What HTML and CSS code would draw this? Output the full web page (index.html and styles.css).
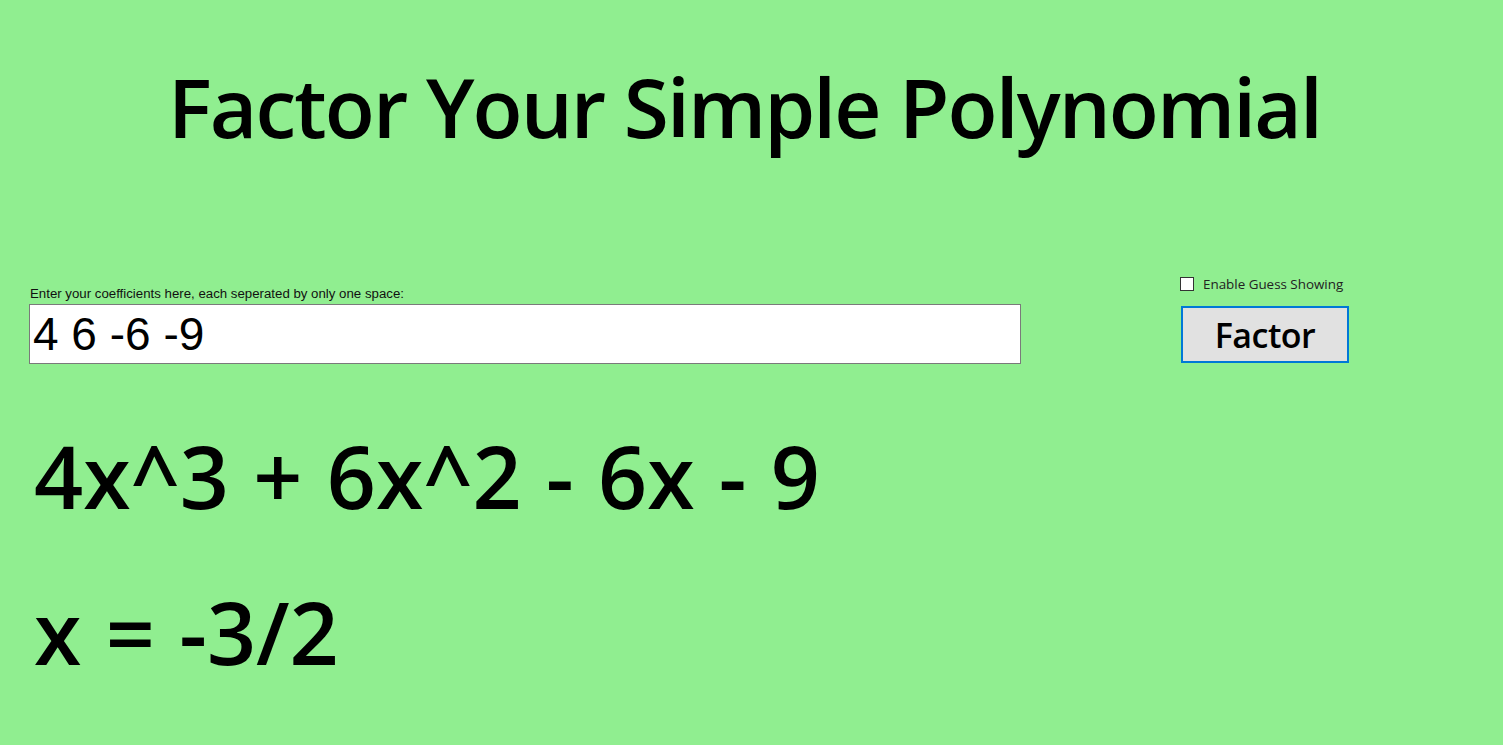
FILE: index.html
```html
<!DOCTYPE html>
<html>
<head>
<meta charset="utf-8">
<title>Factor Your Simple Polynomial</title>
<link rel="stylesheet" href="styles.css">
</head>
<body>
<div class="app">
  <h1 class="title">Factor Your Simple Polynomial</h1>
  <div class="controls">
    <div class="entry">
      <label class="entry-label" for="coef">Enter your coefficients here, each seperated by only one space:</label>
      <input class="entry-input" id="coef" type="text" value="4 6 -6 -9">
    </div>
    <div class="actions">
      <label class="guess"><span class="box"></span><span class="guess-text">Enable Guess Showing</span></label>
      <button class="factor-btn" type="button">Factor</button>
    </div>
  </div>
  <div class="result poly">4x^3 + 6x^2 - 6x - 9</div>
  <div class="result root">x = -3/2</div>
</div>
</body>
</html>
```
FILE: styles.css
```css
html, body {
  margin: 0;
  padding: 0;
  background: #90ee90;
}
body {
  width: 1503px;
  height: 745px;
  overflow: hidden;
  font-family: "Open Sans", "Noto Sans", sans-serif;
  color: #000;
}
.app {
  display: flex;
  flex-direction: column;
}
.title {
  margin: 56px 0 0 0;
  text-align: center;
  font-weight: 600;
  font-size: 82px;
  line-height: 100px;
  letter-spacing: -1.9px;
  padding-right: 14px;
}
.controls {
  display: flex;
  align-items: flex-start;
  margin-top: 121px;
  padding-left: 29px;
}
.entry {
  display: flex;
  flex-direction: column;
  width: 992px;
  padding-top: 9px;
}
.entry-label {
  font-family: "Liberation Sans", Arial, sans-serif;
  font-size: 13.25px;
  line-height: 15px;
  color: #111;
  padding-left: 1px;
  margin-bottom: 3px;
  letter-spacing: 0;
}
.entry-input {
  box-sizing: border-box;
  width: 992px;
  height: 60px;
  border: 1px solid #7a7a7a;
  background: #fff;
  font-family: "Liberation Sans", Arial, sans-serif;
  font-size: 46px;
  padding: 0 0 0 3px;
  margin: 0;
  color: #000;
  outline: none;
}
.actions {
  display: flex;
  flex-direction: column;
  margin-left: 159px;
}
.guess {
  display: flex;
  align-items: center;
  height: 14px;
}
.box {
  box-sizing: border-box;
  width: 14px;
  height: 14px;
  border: 1px solid #333;
  background: #fff;
}
.guess-text {
  margin-left: 9px;
  font-size: 13.4px;
  color: #222;
  letter-spacing: 0;
}
.factor-btn {
  box-sizing: border-box;
  margin-top: 15px;
  margin-left: 1px;
  width: 168px;
  height: 57px;
  background: #e1e1e1;
  border: 2px solid #0078d7;
  font-family: "Open Sans", "Noto Sans", sans-serif;
  font-weight: 600;
  font-size: 34px;
  letter-spacing: -0.5px;
  color: #000;
  padding: 0;
}
.result {
  font-weight: 600;
  font-size: 86px;
  padding-left: 34px;
  letter-spacing: 0px;
  word-spacing: 2px;
  white-space: pre;
}
.poly {
  margin-top: 57px;
  line-height: 110px;
}
.root {
  margin-top: 46px;
  line-height: 110px;
}
```
